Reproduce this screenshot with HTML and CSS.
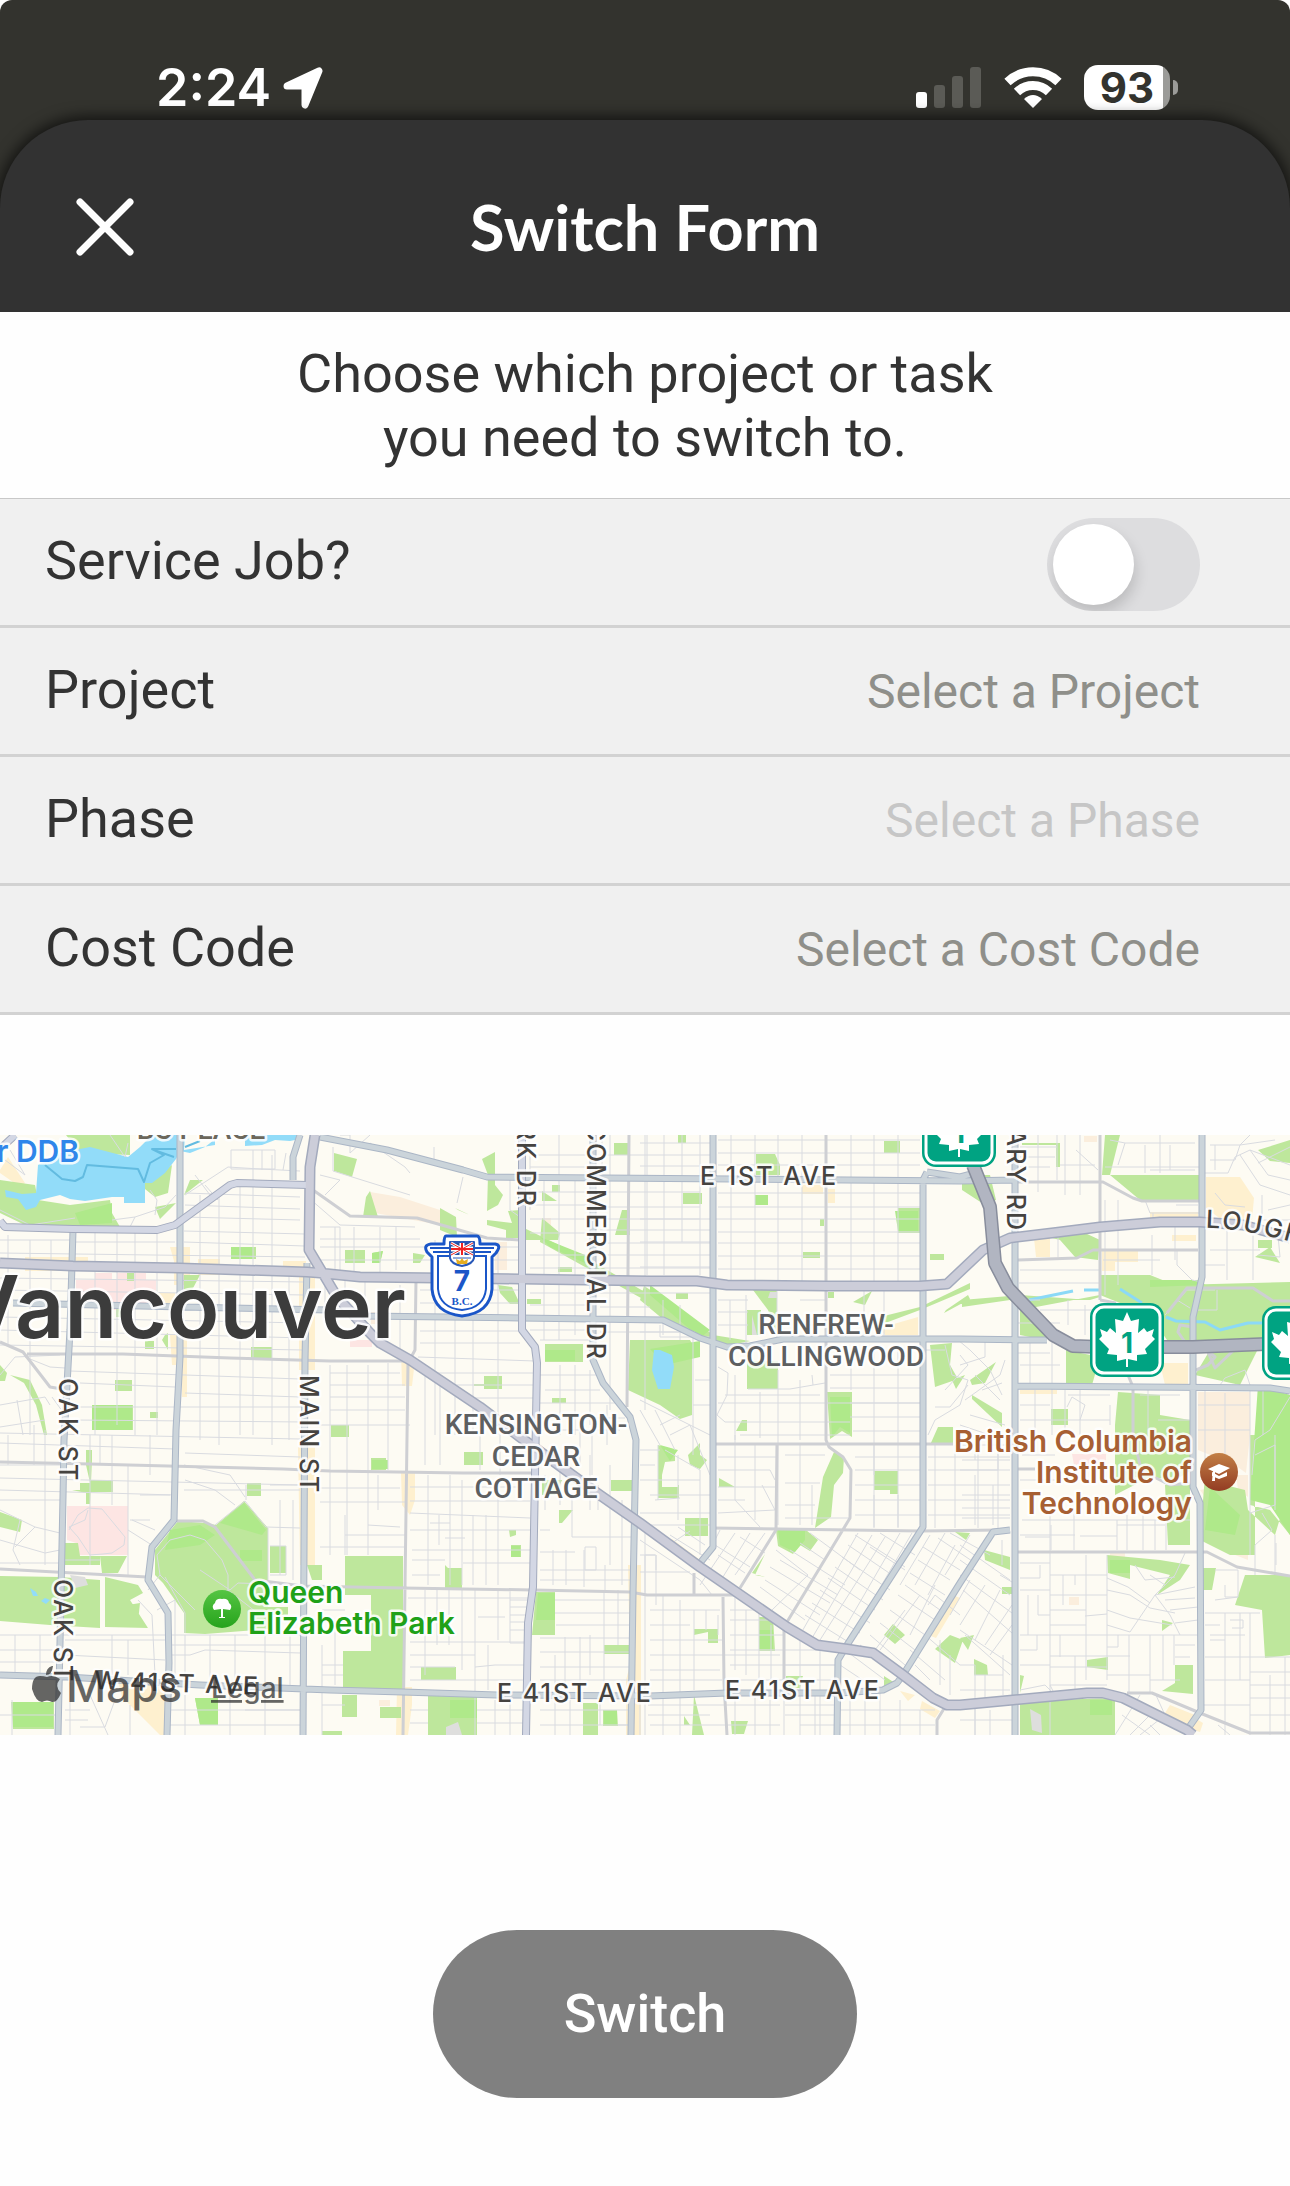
FILE: index.html
```
<!DOCTYPE html>
<html lang="en">
<head>
    <meta charset="UTF-8">
    <meta name="viewport" content="width=device-width, initial-scale=1.0">
    <title>Switch Form</title>
    <link rel="stylesheet" href="styles.css">
</head>
<body>
    <div class="phone">
        <div class="status-bar">
            <div class="status-left">
                <span class="time">2:24</span>
                <svg class="location" width="42" height="42" viewBox="0 0 42 42" aria-hidden="true">
                    <path d="M36 4 L22 38 V19 H4 Z" fill="#fff" stroke="#fff" stroke-width="7" stroke-linejoin="round"/>
                </svg>
            </div>
            <div class="status-right">
                <svg width="66" height="42" viewBox="0 0 66 42" aria-hidden="true">
                    <rect x="0" y="26" width="11" height="16" rx="3" fill="#fff"/>
                    <rect x="18" y="19" width="11" height="23" rx="3" fill="#5b5b56"/>
                    <rect x="36" y="10" width="11" height="32" rx="3" fill="#5b5b56"/>
                    <rect x="54" y="1" width="11" height="41" rx="3" fill="#5b5b56"/>
                </svg>
                <svg width="58" height="44" viewBox="0 0 58 44" aria-hidden="true">
                    <g fill="none" stroke="#fff" stroke-width="9">
                        <path d="M3.500 17 A37 37 0 0 1 54.500 17"/>
                        <path d="M13 27 A23 23 0 0 1 45 27"/>
                    </g>
                    <path d="M29 43 L20 34 Q29 26 38 34 Z" fill="#fff"/>
                </svg>
                <div class="battery"><span>93</span></div>
            </div>
        </div>

        <header class="header">
            <button class="close" aria-label="Close">
                <svg width="58" height="58" viewBox="0 0 58 58" aria-hidden="true">
                    <path d="M4 4 L54 54 M54 4 L4 54" stroke="#fff" stroke-width="7" stroke-linecap="round"/>
                </svg>
            </button>
            <h1>Switch Form</h1>
        </header>

        <main>
            <p class="intro">Choose which project or task<br>you need to switch to.</p>

            <form class="form">
                <div class="row">
                    <label for="service-job">Service Job?</label>
                    <input class="toggle" type="checkbox" id="service-job">
                </div>
                <div class="row">
                    <label for="project">Project</label>
                    <select id="project"><option>Select a Project</option></select>
                </div>
                <div class="row">
                    <label for="phase">Phase</label>
                    <select id="phase" disabled><option>Select a Phase</option></select>
                </div>
                <div class="row">
                    <label for="cost-code">Cost Code</label>
                    <select id="cost-code"><option>Select a Cost Code</option></select>
                </div>
            </form>

            <svg class="map" viewBox="0 0 1290 600" role="img" aria-label="Map of Vancouver">
                <defs>
                    <symbol id="hwy1" viewBox="0 0 74 74">
                        <rect width="74" height="74" rx="14" fill="#00a382"/>
                        <rect x="4" y="4" width="66" height="66" rx="10" fill="none" stroke="#fff" stroke-width="3"/>
                        <path fill="#fff" d="M37 9 L41 18 49 16 48 30 54 25 57 29 64 26 62 33 65 36 55 46 57 51 47 52 47 58 38 56 V64 H36 V56 L27 58 27 52 17 51 19 46 9 36 12 33 10 26 17 29 20 25 26 30 25 16 33 18Z"/>
                        <text x="37" y="50" class="shield-num" fill="#00a382">1</text>
                    </symbol>
                    <linearGradient id="brown" x1="0" y1="0" x2="0" y2="1">
                        <stop offset="0" stop-color="#c27f45"/>
                        <stop offset="1" stop-color="#933c23"/>
                    </linearGradient>
                    <linearGradient id="green" x1="0" y1="0" x2="0" y2="1">
                        <stop offset="0" stop-color="#55c543"/>
                        <stop offset="1" stop-color="#27a31c"/>
                    </linearGradient>
                    <path id="lougheed" d="M1206 93 Q1256 93 1340 122"/>
                </defs>

                <rect width="1290" height="600" fill="#fdfbf3"/>

                <!-- commercial areas -->
                <path class="shop" d="M0 35 L8 22 25 48 20 52 0 38Z M25 122H88V136H25Z M170 112H190V150H174V126Z M198 124H220V140H198Z M283 126H306V140H283Z M157 158H175V168H157Z M299 140H315V235H299Z M170 200H187V262H182V230H172Z M298 312H315V430H300Z M118 546H165V600H160L122 562Z M401 215L415 225 412 251H402Z M401 338H415V365L410 380 402 370Z M397 552H412V570L408 600H396Z M802 50H823V59H802Z M828 54H835V68H828Z M628 430H641V600H626V545L630 530Z M880 193L918 182V200H885Z M672 404L700 425 694 424 670 408Z M740 456L800 495 796 497Z M953 460L960 463 936 503 928 500Z M1034 103H1050V122H1036Z M1102 115H1138V127H1115V136H1102Z M1150 77H1198V85H1150Z M1172 100H1196V106H1172Z M1206 42L1240 42 1254 63 1252 85H1222L1206 73Z M1160 228H1188V250H1165Z M1020 255H1057V259H1020Z M1170 570L1195 580 1188 590 1165 578Z M1195 583L1203 588 1200 597 1190 594Z M900 556L915 560 908 566Z M922 566L940 576 935 583 920 574Z"/>
                <path class="sand" d="M370 57L400 62 440 75V90L375 78Z M495 107H507V135H495Z M542 83H551V91H542Z M1198 257H1250V300L1246 338 1235 330 1198 315Z M1200 355L1228 350 1220 365 1205 362Z M1236 340H1248V362L1238 355Z M1232 404H1248V425L1230 418Z M751 230H765V238H751Z M828 259H835V269H828Z M1170 395H1187V405H1170Z M1110 418H1125V425H1110Z M1069 462H1079V470H1069Z M660 352H675V361H660Z M379 565H390V571H379Z M371 177H378V189H371Z M315 430H322V445H315Z M1084 1H1097V7H1084Z"/>
                <path class="hospital" d="M76 145H95V138H112V144H117V138H146V145H156V168H122V175H112V168H76Z M67 371H128V420H78L76 408 67 405Z M350 205H372V212H350Z M1072 319H1106V330H1074Z"/>

                <!-- parks -->
                <path class="park" d="M66 0H130V20L80 18Z M0 45L35 50 38 65 70 70 110 65 112 78 120 92 25 90 0 78Z M140 50L172 30 168 58 155 62Z M190 45H203L184 60Z M155 72L176 68 160 84Z M184 140H200L192 155H184Z M127 138H134V146H127Z M116 173H122V182H116Z M231 112H256V124H231Z M165 200L168 198V215L162 205Z M145 206H154V214H145Z M251 212H272V223H251Z M115 245H132V256H115Z M92 270H133V295H92Z M150 277H158V283H150Z M10 240L30 245 42 270 47 300H44L36 270 24 248Z M0 230L7 238 5 246 0 246Z M0 377L22 385 20 397 0 392Z M0 441L60 442 100 445V493L50 490 0 486Z M105 442L138 450 143 458 130 465 148 493 105 492Z M128 470L140 468 138 487 130 483Z M72 355H80V348H91V355H113V357H91V352L86 330V315H92V325L90 369H86V358Z M65 408H78L80 421H100V430H65Z M100 421H127L118 438H102Z M90 345H113V357H90Z M247 348H261V361H247Z M11 567H54V594H13Z M195 563H218V590H200Z M270 411H286V438H270Z M307 430H322V445H312Z M334 18L357 24 352 42 334 36Z M370 56L378 82H363L366 62Z M440 73L456 82 457 102 440 95Z M455 73L470 80 465 78 458 75Z M345 115H365V128H345Z M372 118L383 116 380 128H372Z M413 118L425 120 420 128H413Z M482 24L495 17 495 50 503 60 498 70 487 76 488 40Z M487 85L512 88 508 76 520 75V103H506V95L487 90Z M552 50H560V57H552Z M542 56L557 66H542Z M542 83L560 98 558 105 524 105V93L590 125 650 160V168L540 107Z M558 132H572V137H558Z M615 100L622 75H630V100Z M614 8H628V20H614Z M498 150L512 152 520 169H510L500 158Z M527 164H541V169H527Z M545 209H583V227H545Z M484 241H502V254H484V251H474V249H484Z M552 263H566V268H552Z M630 205H690L698 220H692V280L680 284 660 270 628 255Z M331 290H349V302H331Z M371 323H386V335H371Z M345 421H403V554H343V516H371V460H345Z M464 317H483V330H464Z M542 345H562L555 360H542Z M559 375H573L562 388H559Z M445 430L448 433H462V453H445Z M509 395H516V400L510 402Z M511 410H521V422H511Z M536 457H555V500H532Z M604 510H629V519H604Z M611 345H633V356H611Z M421 532H456V545H421Z M428 560H477V600H428Z M342 560H357V582H342Z M380 572H401V583H380Z M583 568H598V600H583Z M603 575H617L618 591H603Z M322 596H342V600H322Z M644 151L675 170 713 200 750 206 790 198 720 212 713 208 664 185 640 165Z M678 0H686V8H678Z M756 19H775L780 30V40H756Z M683 58H702V69H683Z M755 60H768V70H755Z M884 6H900V18H884Z M898 73H920V98H898Z M820 84H824V91H820Z M803 117H820V123H803Z M930 119H944V125H930Z M747 175H761V200H747Z M753 155H777V200L768 175Z M828 157H834V163H828Z M853 167L872 156 865 170Z M880 182L920 172 970 148 970 154 920 175 880 190Z M946 175L968 160 970 164 944 178Z M747 226H778V254H747Z M827 257H852V302L842 296 830 304Z M742 285H747V296H736Z M930 210L952 208 950 230 958 244 935 252Z M952 245L965 240 956 254Z M938 292H953V310H930Z M676 158H688V160H676Z M676 159H688V164H676Z M678 350H679V363H658V310L675 315 675 326 665 327 662 340V352H678Z M688 320L700 308 700 320 707 325 700 334 690 330Z M685 383H708V401H685Z M719 343L735 352H719Z M834 317L844 322 843 338 834 350 831 382 815 393 823 342Z M874 336H898V359H890V355H874Z M776 395H806L818 405 810 416 800 410 793 419 778 411Z M765 419L755 440 765 442 752 438Z M759 482H773L775 516H759Z M694 494H718V508H708V497L694 500Z M786 541H803L800 553H786Z M694 560L704 600H692Z M684 581L690 590H684Z M731 586H748L744 599H732Z M893 489L905 500 895 509 884 500Z M935 514L950 500 963 505 955 528Z M884 541L895 548 884 553Z M955 397L970 398 966 405Z M962 165L1020 160 1090 165 1100 162V140H1150L1175 150 1290 147V205H1167L1150 180 1100 160 1020 175 1010 165 962 172Z M1022 8H1060V32H1056V10H1022Z M1105 0H1120L1110 40H1102Z M1110 40H1200V65H1140Z M1258 15L1290 5V28L1270 26Z M1020 105L1085 98 1100 105 1098 125 1075 122 1060 105 1040 100Z M1020 170L1050 195 1045 205 1020 200Z M1066 215L1100 222 1092 250H1066Z M962 40H990L996 65 985 70 962 55Z M1118 257L1160 260 1160 280 1190 285 1192 335 1175 345 1150 342 1115 360V290Z M1165 350H1190V410H1168Z M1210 215L1260 210 1240 250 1195 240Z M1205 340L1225 350 1245 355 1248 375 1275 400 1290 350V300H1255V420L1230 420 1200 405Z M1250 300H1290V520L1265 523 1262 475 1235 470 1245 440 1290 440V400L1270 375 1250 370Z M1107 420L1160 425 1190 430 1180 445 1157 460 1170 440 1130 430 1130 444 1108 438Z M1203 433H1216L1212 455H1203Z M984 415L1010 422V435L985 425Z M1002 452H1012V459H1002Z M960 503L974 500 968 515Z M974 524L987 530 988 540H974Z M1162 485L1173 488 1162 496Z M1087 525L1108 522V535L1087 532Z M1175 530H1193V559L1162 556 1175 548Z M1020 566L1115 563V600H1020Z M1020 540L1024 541 1020 558Z M1051 274H1068V290H1051Z M972 260L1002 278V292L972 264Z M970 245L996 227 985 248 972 250Z M1255 122L1270 112 1280 128Z M1258 105H1272V113H1258Z M1018 300H1024V306H1018Z M155 440V415L178 386 205 388 216 390 244 366 268 393V472H288V480H268V494L205 499 184 498 184 478 163 448Z"/>
                <path class="park-bright" d="M75 78L112 68V88L80 90Z M231 112H253V124H231Z M92 270H132V295H92Z M244 368L266 395 262 400 220 388Z M170 395L200 390 215 400 200 410 165 415Z M372 118L383 116 380 128H372Z M13 567H53V592H13Z M195 563H218V590H200Z M650 214L700 206V222L665 230Z M540 102L590 122 600 135 550 112Z M650 160V150L710 195 700 203Z M545 215H575V226H545Z M372 325H388V334H372Z M538 458H555V485H536Z M511 411H520V422H511Z M830 262H850V298L840 292 832 302Z M778 395H805V405L795 417 780 410Z M895 76H918V96H898Z M755 60H768V70H755Z M759 495H773V514H759Z M660 310L678 315 670 326Z M450 565H477V583H450Z M604 576H617V590H604Z M1258 250L1290 260V400L1270 370 1250 365Z M1110 425H1130V438H1110Z M1090 565H1112V580H1090Z M1210 352L1240 380 1235 400 1205 395Z M240 415H262V426H240Z M1150 145L1200 145 1205 150 1150 152Z"/>

                <!-- water -->
                <path class="water" d="M5 55L22 59 36 58 38 30 60 18 90 12 128 22 140 12 152 0H185L184 15 215 10V0L214 5 205 12 190 18 180 16 176 24 165 38 152 48 145 48V68H124V62H112L85 66 70 64 60 60 40 65 36 72 26 75 18 64 6 62Z M245 0H300V4L290 6 275 5 262 10 245 11Z M654 215L660 215 672 220 674 232 670 254H658L652 235Z M30 453L36 457 38 461 33 461Z M41 466L45 463 50 465 46 469Z"/>
                <path class="ferry" d="M45 30L62 44 75 46 83 42 87 30 138 34 144 47 150 28 164 20 152 14 176 14 M154 15L174 22 M185 12L200 6"/>
                <path class="creek" d="M1029 165L1073 156 M1084 155H1099 M1120 154L1142 168 M1166 182L1176 186 1205 187 1220 195 1248 188 1265 188"/>
                <path fill="#dededd" d="M70 440L85 442 88 450 75 453Z M446 592L458 587 462 600H446Z M1030 574L1041 580 1042 598 1032 595Z M770 157H777V163H768Z M752 180L757 200H752Z"/>

                <!-- small streets -->
                <g class="street">
                    <path d="M8 100V210 M30 105V300 M51 105V205 M95 97V300 M117 97V290 M135 97V300 M157 97V300 M200 60V305 M219 60V310 M240 48V300 M253 15V300 M272 20V310 M289 140V305 M262 15V35 M8 300V330 M34 290V330 M45 295V430 M100 300V330 M112 300V370 M128 330V440 M150 300V340 M90 300V430 M75 330V345"/>
                    <path d="M0 105H70 M76 107H175 M0 118L305 122 M0 143L305 147 M0 155L305 160 M0 182L305 188 M0 195L305 203 M0 210L305 215 M70 236L300 244 M80 248L175 252 M185 258L300 262 M75 272L305 272 M75 285L305 287 M0 298L300 304 M0 308L175 314 M185 318L300 322 M0 343L300 350 M0 355L175 360 M0 365H65 M130 385H150 M0 428H62 M65 425H100 M0 330H60"/>
                    <path d="M185 58L300 62 M185 70L300 74 M185 82L300 85 M184 96L305 99 M184 107L305 111 M231 15H275V34H231Z M185 60L228 32 260 34 300 36 M205 50L218 65 M195 40L210 60 M0 75L30 90 75 83 M112 85L135 82 130 92 M135 82L165 72 176 60 M150 55L157 65 155 80 M10 15L25 40 5 25 M110 0L125 22 128 8 M283 35L286 18"/>
                    <path d="M0 240L15 222 60 220 M25 222L50 232 65 233 M0 270L45 262 50 270 M17 265L23 300 M45 285L0 292 M52 262L65 280 M0 375L35 392 60 398 M20 385L13 415 20 430 M0 405L45 418 60 415 M35 392L15 412"/>
                    <path d="M69 395L78 380 88 373 102 374 125 402 124 410 112 418 103 419 90 420 78 402 69 392 85 385 88 375 M128 395L155 412 M132 385L155 395 M140 360H170 M184 355H300 M184 330L230 340 245 362 M185 345L215 355 235 370 M215 390L245 366 266 392 300 393 M268 393V450 M246 350V365 M270 350H300 M280 365V440 M293 365V445 M270 411H286V440H270"/>
                    <path d="M157 420L170 405 190 400 205 405 222 425 228 440 228 455 260 480 M157 420L160 440 175 455 195 475 M200 435L230 455 238 448 300 450 M228 455L215 460 M148 455L160 440 M165 442L185 478V498 M138 465L152 480 155 540 M157 475L175 465 175 545"/>
                    <path d="M0 500H300 M0 515H60 M65 505H165 M0 527H60 M65 520L165 525 M170 520H190L205 515 300 518 M170 510H300 M185 500V550 M210 500V545 M235 500V545 M265 500V548 M290 500V550 M40 500V538 M15 500V538 M70 540V600 M90 560L108 600 M115 565L105 592H80 M130 570V600 M185 560V600 M230 560V600 M265 560V600 M170 575H303 M170 590H303 M12 565V600 M0 580H58 M65 575H90 M65 585H88 M245 575H303 M112 500V540 M128 505V540"/>
                    <path d="M310 64L340 90 415 92 M340 0H350V18 M333 12V36L410 60 M370 8L405 32 410 38 M325 60L340 45 320 40 M434 12V28 M463 42L457 68 M350 18L370 0 M320 112H520 M320 92H340V135 M335 92V135 M354 92V140 M380 92V140 M396 92V135 M435 105V300 M455 110V300 M473 105V300 M498 108V300 M320 125H520 M320 104H420 M510 45V75L520 82"/>
                    <path d="M420 155H520 M420 168H520 M345 145V170 M365 145V180 M385 155V205 M400 150V215 M325 145V175 M420 196H520 M420 208H520 M418 222L535 226 M430 238H535 M450 250H535 M465 263H535 M330 238H400 M330 250H405 M330 262H405 M330 275H405 M320 290H410 M330 230V420 M347 230V420 M368 230V420 M388 228V335 M378 340V375 M425 240V330 M440 250V330 M480 275V335 M500 285V340"/>
                    <path d="M530 12V75 M544 45V205 M559 0V205 M575 45V200 M610 0V275 M602 5V45 M645 0V275 M530 20H590 M600 20H710 M530 32H590 M530 57H590 M530 70H590 M600 57H700 M530 84H590 M600 72H700 M600 84H700 M600 95H710 M530 98H590 M530 120H710 M530 133H710 M600 108H710 M530 158H710 M530 170H590 M600 172H650 M530 195H590 M540 205H590 M600 197H690 M540 240H600 M545 255H600 M540 268H615 M540 283H625 M540 295H620 M560 230V300 M575 230V300 M590 235V290 M607 270V310 M592 280V340 M580 280V330"/>
                    <path d="M647 0V140 M664 0V140 M682 0V107 M700 0V140 M731 0V145 M755 0V145 M778 0V145 M802 0V148 M851 0V148 M874 0V148 M898 0V148 M640 8H710 M718 5H920 M718 18H920 M640 31H710 M718 30H920 M718 58H920 M718 72H920 M640 84H920 M718 97H920 M640 107H710 M718 108H920 M718 121H920 M718 134H920 M640 132H710"/>
                    <path d="M718 165H748 M718 177H748 M718 190H748 M730 165V205 M746 160V210 M777 155V205 M800 165H825 M800 190H825 M864 155V200 M884 155V200 M718 232L728 238 727 260 717 280 725 287H850 M718 268H920 M725 260H820 M740 300H850 M748 254H790L825 248 M735 240V305 M760 257V303 M778 235V390 M800 245V305 M812 240L813 250 M851 220V255 M874 215V392 M898 215V392 M920 240H830 M920 253H830 M920 268H850 M920 282H850 M853 296H920 M660 190V202H710 M663 165V200 M680 170V205 M640 197H695 M695 245H710 M693 200V320 M693 270H710 M640 265L710 300 M640 275L660 310 M655 275L675 315 M690 290L710 340 M660 290L680 280 M670 300L690 290 M665 315L700 335V365"/>
                    <path d="M718 322H776 M718 335H770L775 345 M718 352H775 M718 365H745 M718 378L775 375 M735 300V365 M755 310V385 M735 365L760 392 M762 350L775 375 M785 320H825 M785 348H820 M785 370H815 M785 383H850 M800 310V390 M812 350V390 M855 322H920 M855 335H920 M855 350H920 M855 365H920 M855 380H920 M874 310V340 M874 360V393 M898 360V393 M928 322H1010 M928 335H1010 M928 350H1010 M928 365H1010 M928 380H1010 M935 310V393 M955 310V393 M978 310V393 M998 310V393"/>
                    <path d="M650 360H710 M640 378H710 M640 390H710 M658 310V365 M678 320V385 M700 365V420 M655 365L680 363 M670 400L710 425 M678 392L705 410 M672 408L690 396 M640 405L700 445 712 460 M645 420H656V435 M640 437H690 M645 420V458 M656 420V470"/>
                    <path d="M735 398L700 450 M750 398L718 450 M765 398L735 440 M720 395L705 425 M715 410L750 432 M740 402L765 418 M718 420L745 438 M776 415L808 440 772 475 M765 445L820 480 M770 432L830 468 M760 452L805 485 M752 462L790 490 M810 398L860 435 M790 415L845 450 M780 425L838 460 M800 408L825 425"/>
                    <path d="M858 398L800 500 M872 400L808 510 M885 402L820 505 M900 398L838 505 M912 398L870 470 M855 400L905 432 M848 410L895 442 M842 422L890 455 M835 432L883 465 M828 443L875 475 M820 455L870 488 M812 468L860 498 M805 480L850 508 M880 398L915 420 M870 412L905 435"/>
                    <path d="M923 412L960 435 M918 425L950 445 M910 438L945 460 M905 450L940 475 M898 460L935 485 M890 475L925 500 M880 488L915 515 M870 500L905 530 M860 510L895 535 M945 398L915 450 M930 400L900 450 M955 410L928 460 M970 400L945 440 M935 450L910 500 M920 460L880 515 M905 475L875 515 M950 398L990 420 M938 403L975 428 M928 470L935 460 960 480"/>
                    <path d="M650 475H720 M650 490H690 M650 505H725 M650 520H780 M650 535H720 M650 545H722 M663 460V600 M680 465V600 M694 475V555 M706 475V495 M718 480V500 M735 462V535 M746 475V540 M759 470V555 M771 490V550 M784 540V600 M730 475H760 M730 485H770 M730 500H785 M730 515H785 M730 530H835 M730 545H785 M800 505V600 M820 515V600 M785 515H840 M785 530H840 M785 545H840 M648 570H780 M648 580H710 M650 590H780 M735 560V600 M755 560V600 M770 565V600 M785 580H835 M785 570H835 M815 560V600 M800 590H837 M850 560V600 M865 560V600 M880 555V600 M840 575H935 M840 590H935 M900 565V600 M920 575V600 M845 515L885 545 M840 530L870 550"/>
                    <path d="M320 353H400 M320 367H405 M345 380V420 M368 390L400 392 M345 400H405 M320 412H405 M410 352H520 M410 366H530 M410 378L530 383 M410 395H530 M428 340V450 M439 380V410 M450 340V450 M462 345V450 M473 380V450 M486 380V450 M498 350V450 M412 415H530 M412 425H445 M463 428H530 M412 440H440 M445 403H465 M430 388H450 M408 463H530 M425 455V540 M437 455V510 M449 455V510 M462 455V535 M475 455V600 M488 510V555 M498 455V505 M510 455V508H530 M410 507H530 M410 520H475 M410 532H455 M475 532L495 530H530 M410 545H530 M510 465H528 M510 472H528 M510 480H526 M510 487H526 M510 495H525 M478 482H505 M477 575H525 M477 588H525 M495 565V600 M510 565V600 M410 575H428 M410 588H428 M322 475H345 M322 487H345 M322 510V600 M335 485V550 M322 530H343 M322 540H343 M322 570H345"/>
                    <path d="M545 340V375 M560 335V370 M572 358V402 M590 320V375 M598 350V375 M610 330V430 M622 365V450 M540 395H550 M572 402H633 M540 417H575 M585 412H596V435H585Z M553 415V450 M566 415V450 M584 415V452 M605 430V455 M540 435H630 M540 445H630 M555 465H630 M555 478H630 M556 490H630 M540 503H630 M540 517H630 M540 532H630 M540 545H630 M565 502V555 M580 502V550 M604 455V555 M618 455V510 M590 500V540 M555 520V550 M540 575H628 M540 590H628 M555 565V600 M570 565V600 M600 565V590 M618 590H628 M645 390V600 M640 315H660 M640 330H655 M640 345H700 M640 420H655 M640 560V600"/>
                    <path d="M1038 0V57 M1057 0V45 M1065 0V60 M1080 0V60 M1020 12H1057 M1060 30H1095 M1020 22H1055 M1020 32H1050 M1076 15L1098 35 M1110 5L1125 8 1118 30 M1125 8H1195 M1145 10V38 M1160 0V38 M1170 10V35 M1105 32H1200 M1150 35H1195 M1145 65L1150 78 1200 78 M1105 65V160 M1118 65V150 M1103 125H1160 M1152 100V140 M1175 85V125 M1153 78V88 M1176 70H1198 M1018 100H1060 M1058 100V122 M1020 135H1100 M1019 148H1100 M1020 165H1040 M1068 165V190 M1040 175H1100 M1018 188H1060 M1085 170V200"/>
                    <path d="M1210 10H1240L1250 0 M1210 25H1235L1240 10 1275 5 M1205 38H1228L1235 22 1250 15 1290 30 M1240 20L1260 50 1290 60 M1250 15L1268 40 1290 45 M1258 28L1290 12 M1215 58L1225 70 1245 72 M1215 10V35 M1227 95V145 M1253 100V145 M1210 115H1260 M1205 130H1225 M1278 100L1280 122 1258 120 M1268 75L1290 70 M1262 60V85H1290 M1177 115V130L1192 145 1202 147"/>
                    <path d="M1165 180L1187 155 1215 155 M1217 155V175H1195 M1177 165L1190 173 M1220 250L1225 243 1245 235 1250 250 M1205 255V335 M1225 258V340 M1198 270H1250 M1198 295H1250 M1250 255V420 M1263 255V300 M1275 300V375 M1290 262L1270 295 1255 305 1252 340 M1255 320L1275 310V370L1250 378 M1275 400V440 M1255 440V410L1272 395 1262 378 M1276 408V430"/>
                    <path d="M925 215H945 M945 210L952 240 968 245 960 270 935 285 928 300 M960 220L968 230 945 255 M958 205L970 215 M970 215L990 235 1002 260 M975 240L1000 265 M965 265L1000 240 1005 225 M970 280L1005 290 M960 290L990 300 M935 272H950L968 250 M982 255L1002 248 M960 230L985 222V205 M1030 205V250 M1052 205V300 M1018 218H1050 M1020 230H1060 M1020 270H1050 M1020 285H1110 M1065 255V300 M1080 255V300 M1068 260H1110 M1067 272L1072 262 1085 270 1080 285 M1110 270V290 M1148 250V300 M1140 260H1180 M1158 285H1190 M1035 255V300"/>
                    <path d="M962 325H1010 M962 310H1012 M975 300V325 M998 310V335H960 M962 360H1010 M962 373H1010 M962 383H1010 M975 340V390 M993 350V390 M1022 320H1055 M1020 345H1055 M1050 365V600 M1074 375V415 M1020 400H1075 M1080 401H1117 M1117 385V415 M1022 385H1190 M1117 390H1165 M1127 380V415 M1143 380V415 M1155 385V415 M1166 388V415 M1051 390V415 M1025 402H1050 M1020 428H1050 M1020 443H1040V430 M1020 455H1050 M1050 440H1107 M1063 440V470 M1086 420V545 M1075 440V450 M1107 420V545 M1050 460H1107 M1028 460V500 M1038 460V480H1050 M1050 475H1086 M1085 481L1107 479 M1020 500H1200 M1050 490H1086 M1037 500V515H1020 M1060 500V522 M1050 521H1130 M1075 521V560 M1020 530H1050 M1050 532H1107 M1107 540H1150 M1118 500V512H1107 M1129 500V558 M1150 500V558 M1163 500V545 M1174 500V530 M1150 545H1180 M1020 555L1045 550 1055 560 1050 550H1107"/>
                    <path d="M1107 443L1128 452 1150 468 M1107 455L1130 460 1150 473 1175 478 M1107 475L1130 483 1172 490 M1130 497L1155 460 1175 440 1185 418 M1155 460L1170 480 1180 500 M1107 490L1130 497 M1155 460L1195 452 M1165 465L1195 463 M1170 475L1198 472 M1175 488L1198 485 M1150 440L1165 450 M1135 430L1145 445 1175 442 M1175 510H1195 M1175 522H1190"/>
                    <path d="M1205 478H1260 M1225 478V600 M1205 490H1220 M1230 485H1243V493H1232 M1210 500H1245 M1210 505H1225 M1205 522H1290 M1205 545H1250 M1240 478V530 M1250 478V600 M1203 570H1250 M1285 522V600 M1250 537H1290 M1250 550H1290 M1250 563H1290 M1250 580H1290 M1270 540V600 M1215 435H1238V462H1225V450 M1238 462L1215 465 M1218 590L1230 600 M1240 530V545"/>
                    <path d="M960 410L1010 445 M960 425L1010 460 M960 440L1012 478 M963 455L1012 498 M970 445L950 480 M985 450L960 490 M1000 455L975 505 M1012 470L985 510 M960 495L1012 530 M965 500L1010 540 M990 520L1012 490 M960 530H975V600 M985 540V565 M1003 520V560 M974 540H1003 M960 555H1010 M960 585H1012 M975 565V600 M990 575V600 M950 520V560 M940 505V550 M925 500L960 530 M910 515L945 545 M915 530L930 545 M1002 405V430 M1000 440L1012 447"/>
                    <path d="M1115 600L1140 560 M1130 600L1155 575 M1150 590L1160 600 M1122 580L1150 600 M1155 558L1165 580 1140 600"/>
                </g>

                <!-- collector roads -->
                <g class="collector">
                    <path d="M27 219H123L230 223 330 226H410 M0 207L23 217 50 252 62 254 M0 327L90 329 283 334 330 336 463 338H533 M0 434L147 442 M177 386H203L215 392 255 445 303 451 403 453 533 455 630 457 647 460H740 M313 55L350 81 417 83 487 103 520 105 M416 145L415 215 408 228 405 452 403 600 M629 0L627 272 M826 0V305L829 312 843 322 851 335 850 383 787 487 784 495V545 M713 309H953 M713 393L921 396 1000 395 M777 308L776 395 740 453 M694 438V460 M723 462L724 548 727 600"/>
                    <path d="M1017 47H1103L1133 63 1142 66H1200 M1100 0V165 M1018 125L1077 123 1093 115H1198 M1018 417H1207L1237 432 1290 441 M1127 558H1152L1200 578 1250 598H1290 M1167 178L1187 153H1253L1273 166H1290 M1128 240L1133 252V300L1140 330 M1018 334H1035 M1100 165L1116 168 M1196 235L1208 230 1215 222 1207 215 1215 233 1235 214 M1193 192L1180 190 1178 197 1185 207 M937 600V585L945 572 M1140 335L1170 350 1190 348"/>
                </g>

                <!-- arterials -->
                <g id="arterials">
                    <g class="arterial-edge">
                        <path d="M300 0L293 22V45 M180 0V222L176 295 174 385 152 412 148 445 168 478 169 528 167 600 M73 95L70 195 64 305 63 362 60 508 58 600 M307 128L305 225 303 600 M13 168L183 172 330 175 363 181 520 183 663 185 700 203 727 212 750 211 783 204H960L1047 205 M0 540L67 542 200 550 330 555 403 557 497 560 650 561 727 558H840L883 555 897 548 903 540 M593 0V225L603 248 630 282 636 305 633 458 631 600 M320 2L387 15 463 35 487 42 960 46 1015 45 M713 0V412L700 428 M927 37L923 45V392L847 510 838 525 837 600 M927 37L960 42 975 38 M1015 0V600 M1010 395L993 397 960 448 903 540 M1202 0V142L1193 182V352L1200 368 1201 575 1187 595 M1017 251L1270 253 1290 256"/>
                    </g>
                    <g class="arterial">
                        <path d="M300 0L293 22V45 M180 0V222L176 295 174 385 152 412 148 445 168 478 169 528 167 600 M73 95L70 195 64 305 63 362 60 508 58 600 M307 128L305 225 303 600 M13 168L183 172 330 175 363 181 520 183 663 185 700 203 727 212 750 211 783 204H960L1047 205 M0 540L67 542 200 550 330 555 403 557 497 560 650 561 727 558H840L883 555 897 548 903 540 M593 0V225L603 248 630 282 636 305 633 458 631 600 M320 2L387 15 463 35 487 42 960 46 1015 45 M713 0V412L700 428 M927 37L923 45V392L847 510 838 525 837 600 M927 37L960 42 975 38 M1015 0V600 M1010 395L993 397 960 448 903 540 M1202 0V142L1193 182V352L1200 368 1201 575 1187 595 M1017 251L1270 253 1290 256"/>
                    </g>
                </g>

                <!-- main roads -->
                <path class="major-edge thin" d="M0 86L5 92 73 94 157 95 175 90 230 50 237 48 307 50 M522 0V195L535 212 537 228 533 452 528 488 526 600 M0 14L15 0"/>
                <path class="major-edge" d="M0 128L73 131 180 133 307 137 320 138 360 142 520 144 650 146H697L727 150 827 151H920L947 149 983 115 1010 103 1060 97 1100 92 1160 87H1200L1243 90 1290 103 M315 0L310 32 309 115 337 162 370 198 380 208 410 225 480 272 520 302 597 358 640 388 700 432 787 492 817 510 847 514 873 518 903 540 933 563 947 570H960L1013 565 1087 558H1103L1123 563 1187 595 1193 600"/>
                <path class="major thin" d="M0 86L5 92 73 94 157 95 175 90 230 50 237 48 307 50 M522 0V195L535 212 537 228 533 452 528 488 526 600 M0 14L15 0"/>
                <path class="major" d="M0 128L73 131 180 133 307 137 320 138 360 142 520 144 650 146H697L727 150 827 151H920L947 149 983 115 1010 103 1060 97 1100 92 1160 87H1200L1243 90 1290 103 M315 0L310 32 309 115 337 162 370 198 380 208 410 225 480 272 520 302 597 358 640 388 700 432 787 492 817 510 847 514 873 518 903 540 933 563 947 570H960L1013 565 1087 558H1103L1123 563 1187 595 1193 600"/>
                <path class="freeway-edge" d="M973 30L990 72 995 128 1008 153 1053 200 1073 211 1100 212H1193L1290 208"/>
                <path class="freeway" d="M973 30L990 72 995 128 1008 153 1053 200 1073 211 1100 212H1193L1290 208"/>

                <!-- shields -->
                <use href="#hwy1" x="922" y="-42" width="74" height="74"/>
                <use href="#hwy1" x="1090" y="168" width="74" height="74"/>
                <use href="#hwy1" x="1262" y="171" width="74" height="74"/>
                <g stroke-linejoin="round">
                    <path d="M446 101H477Q480 101 480 109H495Q502 110 496 118L492 122V154Q490 178 462 181Q434 178 432 154V122L427 117Q423 110 431 109H444Q444 101 446 101Z" fill="#fff" stroke="#1a56c8" stroke-width="3"/>
                    <path d="M438 120V154Q440 173 462 175Q484 173 486 154V120 M430 113H449 M475 113H494 M433 117H449 M475 117H491 M438 121H449 M475 121H486" fill="none" stroke="#1a56c8" stroke-width="2"/>
                    <path d="M450 107H474V123Q473 129 462 131Q451 129 450 123Z" fill="#fff" stroke="#2858b8" stroke-width="2"/>
                    <path d="M451 108H473V120H451Z" fill="#244f9f"/>
                    <path d="M451 108L473 120M473 108L451 120" stroke="#fff" stroke-width="3"/>
                    <path d="M462 108V120M451 114H473" stroke="#fff" stroke-width="5"/>
                    <path d="M451 108L473 120M473 108L451 120" stroke="#e22" stroke-width="1"/>
                    <path d="M462 108V120M451 114H473" stroke="#e22" stroke-width="2"/>
                    <path d="M453 123H471" stroke="#2858b8"/>
                    <path d="M457 129L456 124 460 126 462 123 464 126 468 124 467 129Z" fill="#e5ad20"/>
                </g>
                <text x="462" y="156" class="shield-num" fill="#1a56c8">7</text>
                <text x="462" y="170" class="shield-bc">B.C.</text>

                <!-- labels -->
                <text x="406" y="203" class="city" text-anchor="end">Vancouver</text>
                <g class="area">
                    <text x="826" y="199">RENFREW-</text>
                    <text x="826" y="231">COLLINGWOOD</text>
                    <text x="536" y="299">KENSINGTON-</text>
                    <text x="536" y="331">CEDAR</text>
                    <text x="536" y="363">COTTAGE</text>
                    <text x="201" y="4" fill="#6b675c">BC PLACE</text>
                </g>
                <g class="road-name">
                    <text x="700" y="50">E 1ST AVE</text>
                    <text x="497" y="567">E 41ST AVE</text>
                    <text x="725" y="564">E 41ST AVE</text>
                    <text transform="translate(94 554) rotate(2)">W 41ST AVE</text>
                    <text transform="translate(59 243) rotate(90)">OAK ST</text>
                    <text transform="translate(54 444) rotate(90)">OAK ST</text>
                    <text transform="translate(300 240) rotate(90)">MAIN ST</text>
                    <text transform="translate(517 73) rotate(90)" text-anchor="end">CLARK DR</text>
                    <text transform="translate(587 226) rotate(90)" text-anchor="end">COMMERCIAL DR</text>
                    <text transform="translate(1007 97) rotate(90)" text-anchor="end">BOUNDARY RD</text>
                    <text><textPath href="#lougheed">LOUGHEED HWY</textPath></text>
                </g>
                <g class="place">
                    <text x="79" y="27" fill="#2f86ea" text-anchor="end">r DDB</text>
                    <text x="248" y="468" fill="#20a118">Queen</text>
                    <text x="248" y="499" fill="#20a118">Elizabeth Park</text>
                    <text x="1192" y="317" fill="#a75f33" text-anchor="end">British Columbia</text>
                    <text x="1192" y="348" fill="#a75f33" text-anchor="end">Institute of</text>
                    <text x="1192" y="379" fill="#a75f33" text-anchor="end">Technology</text>
                </g>
                <circle cx="222" cy="474" r="19" fill="url(#green)"/>
                <path fill="#fff" d="M221 474L214 475Q211 471 215 468Q216 463 222 464Q228 463 229 468Q233 471 230 475L223 474V482H225V483H219V482H221Z"/>
                <circle cx="1219" cy="337" r="19" fill="url(#brown)"/>
                <path fill="#fff" d="M1208 334L1219 329 1230 333 1219 339Z M1212 337L1219 341 1227 337V341L1219 344 1212 341Z M1213 336H1215V346H1212Z"/>

                <g class="credit">
                    <path d="M52 531Q46 533 46 540Q52 540 53 531Z M47 542Q53 539 60 544Q54 551 61 558Q57 568 52 567Q47 564 42 567Q36 567 32 554Q32 541 40 541Q44 541 47 542Z"/>
                    <text x="66" y="567" class="maps">Maps</text>
                    <a href="#legal"><text x="211" y="563" class="legal">Legal</text></a>
                </g>
            </svg>

            <div class="actions">
                <button class="btn-switch">Switch</button>
            </div>
        </main>
    </div>
</body>
</html>
```

FILE: styles.css
```
* {
    box-sizing: border-box;
}
body {
    margin: 0;
    background-color: #fefefe;
    color: #333;
    font-family: Roboto, Arial, sans-serif;
}
.phone {
    width: 100%;
    overflow: hidden;
}

/* status bar */
.status-bar {
    display: flex;
    justify-content: space-between;
    align-items: flex-start;
    height: 220px;
    margin-bottom: -100px;
    padding: 60px 120px 0 156px;
    background-color: #33332e;
    border-radius: 12px 12px 0 0;
    color: #fff;
    font-family: Inter, sans-serif;
}
.status-left {
    display: flex;
    align-items: center;
    gap: 12px;
    height: 56px;
}
.time {
    font-size: 52px;
    font-weight: 600;
    line-height: 56px;
}
.status-right {
    display: flex;
    align-items: center;
    gap: 22px;
    height: 54px;
}
.battery {
    position: relative;
    width: 86px;
    height: 45px;
    border-radius: 14px;
    background: linear-gradient(90deg, #fff 79px, #9b9b98 79px);
    color: #33332e;
    font-size: 42px;
    font-weight: 700;
    line-height: 45px;
    text-align: center;
}
.battery::after {
    content: "";
    position: absolute;
    top: 15px;
    right: -8px;
    width: 5px;
    height: 15px;
    border-radius: 0 5px 5px 0;
    background-color: #9b9b98;
}

/* header */
.header {
    position: relative;
    display: flex;
    align-items: center;
    height: 192px;
    padding: 22px 76px 0;
    background-color: #323232;
    border-radius: 88px 88px 0 0;
    box-shadow: 0 0 14px 4px rgba(0, 0, 0, 0.6);
    color: #fff;
}
.header h1 {
    flex: 1;
    margin: 0;
    padding-right: 58px;
    font-family: Lato, sans-serif;
    font-size: 63px;
    font-weight: 700;
    line-height: 72px;
    text-align: center;
}
.close {
    display: flex;
    padding: 0;
    border: none;
    background: none;
    cursor: pointer;
}
main {
    position: relative;
    background-color: #fefefe;
}
.intro {
    margin: 0;
    padding: 30px 40px 28px;
    font-size: 54px;
    line-height: 64px;
    text-align: center;
}

/* form rows */
.form {
    border-top: 1px solid #c8c8c8;
}
.row {
    display: flex;
    align-items: center;
    justify-content: space-between;
    height: 129px;
    padding: 0 90px 0 45px;
    border-bottom: 3px solid #d2d2d2;
    background-color: #f0f0f0;
    font-size: 54px;
    line-height: 62px;
}
.row label {
    padding-bottom: 2px;
}
.row select {
    appearance: none;
    padding: 0;
    border: none;
    background: none;
    color: #8f8f8a;
    font-family: inherit;
    font-size: 48px;
    text-align-last: right;
    cursor: pointer;
}
.row select:disabled {
    color: #c6c6c6;
    opacity: 1;
}
.toggle {
    appearance: none;
    width: 153px;
    height: 93px;
    margin: 4px 0 0;
    padding: 6px;
    border-radius: 47px;
    background-color: #dddddf;
    overflow: hidden;
    cursor: pointer;
}
.toggle::before {
    content: "";
    display: block;
    width: 81px;
    height: 81px;
    border-radius: 50%;
    background-color: #fff;
    box-shadow: 2px 8px 14px rgba(0, 0, 0, 0.15);
}
.toggle:checked {
    background-color: #34c759;
}
.toggle:checked::before {
    margin-left: auto;
}

/* map */
.map {
    display: block;
    width: 100%;
    margin-top: 120px;
    overflow: hidden;
}
.map path {
    stroke-linejoin: round;
}
.shop {
    fill: #fef0cf;
}
.sand {
    fill: #fbeedd;
}
.hospital {
    fill: #fde5e3;
}
.park {
    fill: #bee79c;
}
.park-bright {
    fill: #afe98a;
}
.water {
    fill: #92dcf9;
}
.ferry {
    fill: none;
    stroke: #62bbe0;
    stroke-width: 2;
}
.creek {
    fill: none;
    stroke: #8bd9f7;
    stroke-width: 3;
}
.street {
    fill: none;
    stroke: #d9dbe0;
    stroke-width: 1;
}
.collector {
    fill: none;
    stroke: #cecfd3;
    stroke-width: 3;
}
.arterial-edge {
    fill: none;
    stroke: #abb6c6;
    stroke-width: 7;
}
.arterial {
    fill: none;
    stroke: #cbd4da;
    stroke-width: 5;
}
.major-edge {
    fill: none;
    stroke: #a3aabd;
    stroke-width: 11;
}
.major {
    fill: none;
    stroke: #cccdd9;
    stroke-width: 8;
}
.major-edge.thin {
    stroke-width: 8;
}
.major.thin {
    stroke: #d3d7e4;
    stroke-width: 6;
}
.freeway-edge {
    fill: none;
    stroke: #888d9c;
    stroke-width: 14;
}
.freeway {
    fill: none;
    stroke: #b1b5c1;
    stroke-width: 11;
}
.map text {
    font-family: Inter, sans-serif;
    paint-order: stroke;
    stroke: rgba(255, 255, 255, 0.85);
    stroke-width: 5px;
    stroke-linejoin: round;
}
.map .city {
    fill: #3c3c3c;
    font-size: 86px;
    font-weight: 600;
}
.map .area text {
    font-family: Roboto, sans-serif;
    font-size: 28px;
    font-weight: 500;
    text-anchor: middle;
}
.area {
    fill: #5d5f61;
}
.map .road-name text {
    fill: #454340;
    font-size: 25px;
    font-weight: 500;
    letter-spacing: 2px;
}
.map .place text {
    font-size: 30px;
    font-weight: 600;
}
.map .shield-num {
    stroke: none;
    font-size: 28px;
    font-weight: 700;
    text-anchor: middle;
}
.map .shield-bc {
    fill: #1a56c8;
    stroke: none;
    font-family: "Liberation Serif", serif;
    font-size: 11px;
    font-weight: 700;
    text-anchor: middle;
}
.credit {
    fill: #2c2c2c;
    opacity: 0.72;
}
.map .credit text {
    stroke: none;
}
.map .maps {
    font-size: 44px;
    font-weight: 500;
}
.map .legal {
    font-size: 28px;
    font-weight: 500;
    text-decoration: underline;
}

/* bottom button */
.actions {
    display: flex;
    justify-content: center;
    padding: 195px 0 88px;
}
.btn-switch {
    padding: 52px 131px;
    border: none;
    border-radius: 84px;
    background-color: #808080;
    color: #fff;
    font-family: inherit;
    font-size: 54px;
    font-weight: 500;
    line-height: 64px;
    cursor: pointer;
}
```
